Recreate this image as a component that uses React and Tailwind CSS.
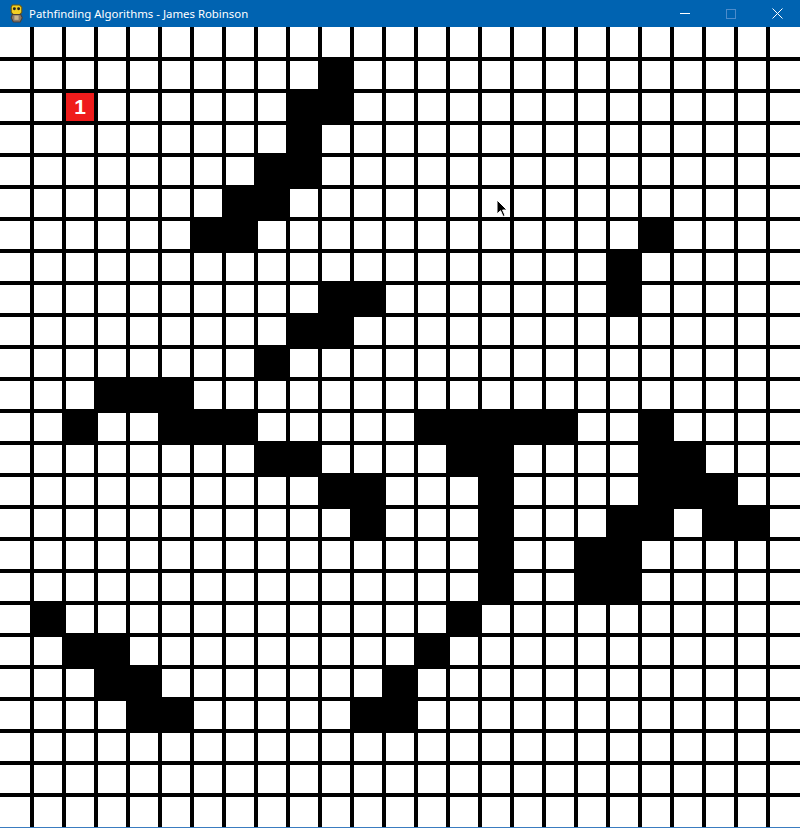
import React from 'react';

// black cells per row (column indices, 0-based, 25x25 board)
const walls = {
  1: [10],
  2: [9, 10],
  3: [9],
  4: [8, 9],
  5: [7, 8],
  6: [6, 7, 20],
  7: [19],
  8: [10, 11, 19],
  9: [9, 10],
  10: [8],
  11: [3, 4, 5],
  12: [2, 5, 6, 7, 13, 14, 15, 16, 17, 20],
  13: [8, 9, 14, 15, 20, 21],
  14: [10, 11, 15, 20, 21, 22],
  15: [11, 15, 19, 20, 22, 23],
  16: [15, 18, 19],
  17: [15, 18, 19],
  18: [1, 14],
  19: [2, 3, 13],
  20: [3, 4, 12],
  21: [4, 5, 11, 12],
};

const start = { row: 2, col: 2 };

function PygameIcon() {
  return (
    <svg width="17" height="19" viewBox="0 0 16 18">
      <path d="M4 1h7l2 2v5l-2 2H5L3 8V3z" fill="#f2d024" stroke="#6b5a10" strokeWidth="1" />
      <circle cx="6" cy="4.5" r="1.4" fill="#222" />
      <circle cx="10" cy="4.5" r="1.4" fill="#222" />
      <path d="M4 10h8l1.5 3-2 4H5l-2-4z" fill="#8a7a6a" stroke="#4a4038" strokeWidth="1" />
      <path d="M6 11h4v4H6z" fill="#c9b48a" />
    </svg>
  );
}

function TitleBar() {
  return (
    <div className="flex h-[27px] items-center bg-[#0063b1] text-white">
      <div className="flex w-[29px] items-center justify-center pl-1">
        <PygameIcon />
      </div>
      <span className="text-[11.4px] leading-none" style={{ fontFamily: '"Segoe UI", "Noto Sans", sans-serif' }}>
        Pathfinding Algorithms - James Robinson
      </span>
      <div className="ml-auto flex h-full">
        <div className="flex w-[46px] items-center justify-center">
          <div className="h-px w-[10px] bg-white" />
        </div>
        <div className="flex w-[46px] items-center justify-center">
          <div className="h-[10px] w-[10px] border border-[#4d8ccb]" />
        </div>
        <div className="flex w-[46px] items-center justify-center">
          <svg width="11" height="11" viewBox="0 0 11 11">
            <path d="M0.5 0.5L10.5 10.5M10.5 0.5L0.5 10.5" stroke="white" strokeWidth="1" />
          </svg>
        </div>
      </div>
    </div>
  );
}

function Cell({ row, col }) {
  if (row === start.row && col === start.col) {
    return (
      <div className="flex items-center justify-center bg-[#ef1c1c] text-[21px] font-bold text-white" style={{ fontFamily: '"Liberation Sans", sans-serif' }}>
        1
      </div>
    );
  }
  const isWall = (walls[row] || []).includes(col);
  return <div className={isWall ? 'bg-black' : 'bg-white'} />;
}

function Board() {
  const cells = [];
  for (let r = 0; r < 25; r++) {
    for (let c = 0; c < 25; c++) {
      cells.push(<Cell key={`${r}-${c}`} row={r} col={c} />);
    }
  }
  return (
    <div className="grid grid-cols-[30px_repeat(23,28px)_30px] grid-rows-[30px_repeat(23,28px)_30px] gap-[4px] bg-black">
      {cells}
    </div>
  );
}

export default function App() {
  return (
    <div className="relative h-[828px] w-[800px] overflow-hidden border-b border-[#3a7cc0] bg-white">
      <TitleBar />
      <Board />
      {/* mouse pointer */}
      <svg className="absolute left-[496px] top-[199px]" width="12" height="19" viewBox="0 0 12 19">
        <path d="M1 1v14l3.5-3.3 2.6 5.8 2-0.9-2.5-5.6H11z" fill="black" stroke="white" strokeWidth="1" />
      </svg>
    </div>
  );
}
